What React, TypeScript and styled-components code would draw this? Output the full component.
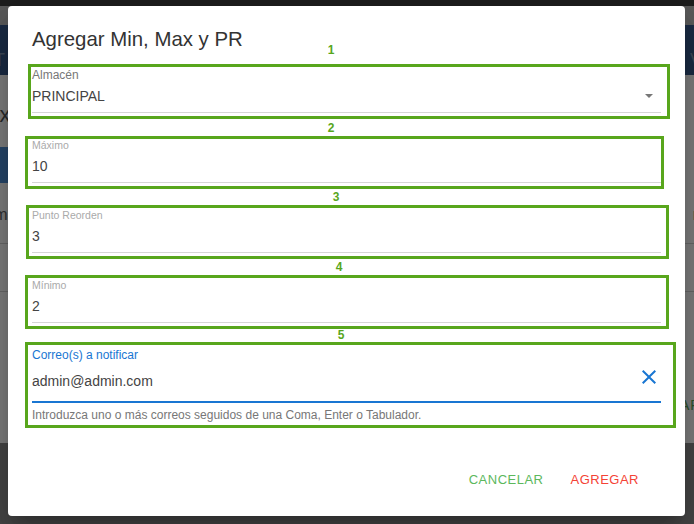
import React from "react";
import styled, { createGlobalStyle } from "styled-components";

const GlobalStyle = createGlobalStyle`
  html, body { margin: 0; padding: 0; }
  body {
    font-family: "Liberation Sans", Arial, Helvetica, sans-serif;
    overflow: hidden;
    background: #8e8e8e;
  }
  * { box-sizing: border-box; }
`;

const ANNOT = "#58a61c";

/* ---------- background page (behind the dialog) ---------- */
const Stage = styled.div`
  position: relative;
  width: 694px;
  height: 524px;
  overflow: hidden;
`;

const BgPage = styled.div`
  display: flex;
  flex-direction: column;
  height: 524px;
`;

const TopBar = styled.div`
  height: 6px;
  background: #3d3d3d;
`;

const SubBar = styled.div`
  height: 19px;
  background: #b6b6b6;
`;

const Header = styled.div`
  height: 50px;
  background: #37598a;
  display: flex;
  align-items: center;
  justify-content: space-between;
  padding-top: 20px;
  color: rgba(255, 255, 255, 0.35);
  font-size: 18px;
`;

const HeaderItem = styled.span<{ $side: "left" | "right" }>`
  ${(p) => (p.$side === "left" ? "margin-left: -6px;" : "margin-right: -8px;")}
`;

const Content = styled.div`
  height: 368px;
  background: #ffffff;
  padding-top: 26px;
  display: flex;
  flex-direction: column;
`;

const PageTitle = styled.div`
  font-size: 22px;
  line-height: 28px;
  color: #555;
  margin-left: -31px;
`;

const PageButton = styled.div`
  margin-top: 18px;
  margin-left: -56px;
  width: 110px;
  height: 36px;
  background: #4f8fd6;
  color: #fff;
  font-size: 14px;
  display: flex;
  align-items: center;
  justify-content: flex-end;
  padding-right: 8px;
`;

const TableHead = styled.div`
  margin-top: 20px;
  height: 41px;
  border-bottom: 1px solid #d2d2d2;
  display: flex;
  justify-content: space-between;
  padding-top: 4px;
  font-size: 16px;
  line-height: 16px;
  color: #666;
`;

const HeadCell = styled.span<{ $side: "left" | "right" }>`
  ${(p) => (p.$side === "left" ? "margin-left: -20px;" : "margin-right: -20px;")}
`;

const TableRow = styled.div`
  height: 48px;
  border-bottom: 1px solid #d2d2d2;
`;

const PageActions = styled.div`
  margin-top: 105px;
  display: flex;
  justify-content: flex-end;
  margin-right: -40px;
  font-size: 14px;
  color: #5aa85a;
  letter-spacing: 1px;
`;

const Footer = styled.div`
  flex: 1;
  background: #8e8e8e;
`;

/* ---------- backdrop + dialog ---------- */
const Backdrop = styled.div`
  position: absolute;
  inset: 0;
  background: rgba(0, 0, 0, 0.5);
  display: flex;
  padding: 6px 9px 8px 8px;
`;

const Dialog = styled.div`
  flex: 1;
  background: #ffffff;
  border-radius: 4px;
  box-shadow: 0 11px 15px -7px rgba(0, 0, 0, 0.2),
    0 24px 38px 3px rgba(0, 0, 0, 0.14), 0 9px 46px 8px rgba(0, 0, 0, 0.12);
  display: flex;
  flex-direction: column;
  padding: 17px 24px 19px;
`;

const Title = styled.h2`
  margin: 0;
  font-size: 20.4px;
  line-height: 32px;
  font-weight: 400;
  color: #333;
`;

const Form = styled.div`
  margin-top: 12px;
  display: flex;
  flex-direction: column;
  gap: 24px;
`;

const Field = styled.div`
  position: relative;
`;

const Label = styled.div<{ $size: number; $color: string }>`
  font-size: ${(p) => p.$size}px;
  line-height: 16px;
  height: 16px;
  color: ${(p) => p.$color};
  white-space: nowrap;
`;

const ValueRow = styled.div`
  margin-top: 3px;
  height: 20px;
  display: flex;
  align-items: center;
  justify-content: space-between;
`;

const Value = styled.span`
  font-size: 14px;
  line-height: 20px;
  color: #444;
`;

const ArrowBox = styled.span`
  width: 24px;
  height: 20px;
  display: flex;
  align-items: center;
  justify-content: center;
`;

const Underline = styled.div<{ $active?: boolean }>`
  margin-top: ${(p) => (p.$active ? 8 : 6)}px;
  height: ${(p) => (p.$active ? 2 : 1)}px;
  background: ${(p) => (p.$active ? "#1976d2" : "#d6d6d6")};
`;

const ChipRow = styled.div`
  margin-top: 2px;
  height: 28px;
  display: flex;
  align-items: flex-start;
  justify-content: space-between;
`;

const ChipValue = styled.span`
  padding-top: 6px;
  font-size: 14px;
  line-height: 20px;
  color: #444;
`;

const ClearIcon = styled.svg`
  width: 24px;
  height: 24px;
  fill: #1976d2;
  display: block;
`;

const Helper = styled.div`
  margin-top: 5px;
  font-size: 12px;
  line-height: 14px;
  color: #777;
  white-space: nowrap;
`;

const AnnotBox = styled.div<{ $t: number; $r: number; $b: number; $l: number }>`
  position: absolute;
  top: ${(p) => p.$t}px;
  right: ${(p) => p.$r}px;
  bottom: ${(p) => p.$b}px;
  left: ${(p) => p.$l}px;
  border: 3px solid ${ANNOT};
  pointer-events: none;
`;

const AnnotNum = styled.span<{ $x: number; $y: number }>`
  position: absolute;
  left: ${(p) => p.$x}px;
  top: ${(p) => p.$y}px;
  transform: translate(-50%, -50%);
  font-size: 12px;
  font-weight: 700;
  line-height: 14px;
  color: ${ANNOT};
`;

const Actions = styled.div`
  margin-top: auto;
  display: flex;
  justify-content: flex-end;
  gap: 3px;
  padding-right: 10px;
`;

const TextButton = styled.button<{ $color: string }>`
  height: 36px;
  padding: 0 12px;
  border: none;
  background: none;
  font-family: inherit;
  font-size: 13px;
  letter-spacing: 0.5px;
  text-transform: uppercase;
  color: ${(p) => p.$color};
  cursor: pointer;
`;

type Annot = { n: number; t: number; r: number; b: number; l: number; x: number; y: number };

const Annotation: React.FC<{ a: Annot }> = ({ a }) => (
  <>
    <AnnotBox $t={a.t} $r={a.r} $b={a.b} $l={a.l} />
    <AnnotNum $x={a.x} $y={a.y}>{a.n}</AnnotNum>
  </>
);

const annots: Annot[] = [
  { n: 1, t: -3, r: -9, b: -6, l: -4, x: 299, y: -17 },
  { n: 2, t: -1, r: -3, b: -6, l: -7, x: 299, y: -9 },
  { n: 3, t: -2, r: -8, b: -6, l: -6, x: 304, y: -10 },
  { n: 4, t: -2, r: -8, b: -6, l: -7, x: 307, y: -10 },
  { n: 5, t: -5, r: -15, b: -6, l: -7, x: 309, y: -12 },
];

const numberFields = [
  { label: "Máximo", value: "10" },
  { label: "Punto Reorden", value: "3" },
  { label: "Mínimo", value: "2" },
];

export default function App() {
  return (
    <Stage>
      <GlobalStyle />
      <BgPage>
        <TopBar />
        <SubBar />
        <Header>
          <HeaderItem $side="left">T</HeaderItem>
          <HeaderItem $side="right">V</HeaderItem>
        </Header>
        <Content>
          <PageTitle>Máximos y Mínimos</PageTitle>
          <PageButton>AGR</PageButton>
          <TableHead>
            <HeadCell $side="left">Alm</HeadCell>
            <HeadCell $side="right">nin</HeadCell>
          </TableHead>
          <TableRow />
          <PageActions>GUARDAR</PageActions>
        </Content>
        <Footer />
      </BgPage>

      <Backdrop>
        <Dialog>
          <Title>Agregar Min, Max y PR</Title>
          <Form>
            <Field>
              <Label $size={12} $color="#777">Almacén</Label>
              <ValueRow>
                <Value>PRINCIPAL</Value>
                <ArrowBox>
                  <svg width="8" height="4" viewBox="0 0 8 4">
                    <path d="M0 0h8L4 4z" fill="#777" />
                  </svg>
                </ArrowBox>
              </ValueRow>
              <Underline />
              <Annotation a={annots[0]} />
            </Field>

            {numberFields.map((f, i) => (
              <Field key={f.label}>
                <Label $size={10.5} $color="#aaa">{f.label}</Label>
                <ValueRow>
                  <Value>{f.value}</Value>
                </ValueRow>
                <Underline />
                <Annotation a={annots[i + 1]} />
              </Field>
            ))}

            <Field>
              <Label $size={12} $color="#1976d2">Correo(s) a notificar</Label>
              <ChipRow>
                <ChipValue>admin@admin.com</ChipValue>
                <ClearIcon viewBox="0 0 24 24">
                  <path d="M19 6.41 17.59 5 12 10.59 6.41 5 5 6.41 10.59 12 5 17.59 6.41 19 12 13.41 17.59 19 19 17.59 13.41 12z" />
                </ClearIcon>
              </ChipRow>
              <Underline $active />
              <Helper>Introduzca uno o más correos seguidos de una Coma, Enter o Tabulador.</Helper>
              <Annotation a={annots[4]} />
            </Field>
          </Form>
          <Actions>
            <TextButton $color="#5cb85c">Cancelar</TextButton>
            <TextButton $color="#f44336">Agregar</TextButton>
          </Actions>
        </Dialog>
      </Backdrop>
    </Stage>
  );
}
